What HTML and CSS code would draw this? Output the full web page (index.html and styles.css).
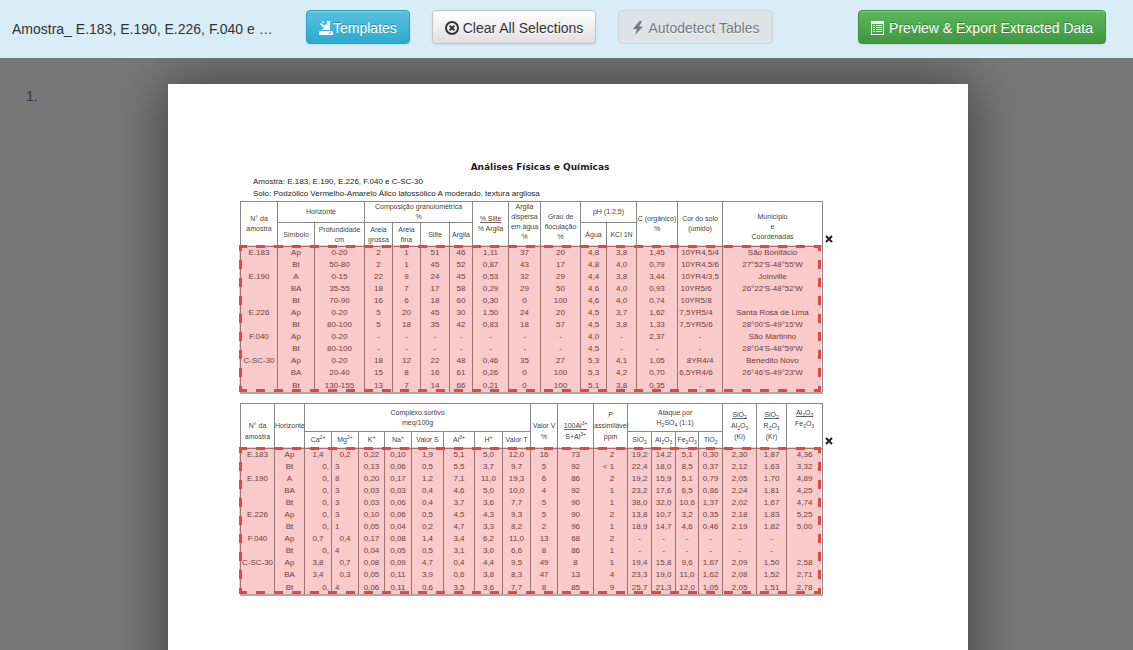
FILE: index.html
```html
<!DOCTYPE html>
<html lang="en">
<head>
<meta charset="utf-8">
<title>Amostra_ E.183, E.190, E.226, F.040 e C-SC-30</title>
<link rel="stylesheet" href="styles.css">
</head>
<body>
<header class="toolbar">
  <span class="doc-name">Amostra_ E.183, E.190, E.226, F.040 e …</span>
  <button type="button" class="btn btn-info"><svg class="icon" viewBox="0 0 14 14" aria-hidden="true"><path d="M1 10h12l1 1v3H0v-3zM2 9l3-2-3-3 1-1 3 2V3l2 1V0h3v9zM1 3l1-1 1 1-1 1zM3 1l1-1 1 1-1 1z"/><path class="slot" d="M10 12h2"/></svg>Templates</button>
  <button type="button" class="btn"><svg class="icon" viewBox="0 0 14 14" aria-hidden="true"><circle class="line" cx="7" cy="7" r="6"/><path class="line" d="M4.6 4.6l4.8 4.8M9.4 4.6L4.6 9.4"/></svg> Clear All Selections</button>
  <button type="button" class="btn" disabled><svg class="icon" viewBox="0 0 14 14" aria-hidden="true"><path d="M8.500 0L2 8h4l-2 6 8-8.500H8L11 0z"/></svg> Autodetect Tables</button>
  <button type="button" class="btn btn-success"><svg class="icon" viewBox="0 0 14 14" aria-hidden="true"><path fill-rule="evenodd" d="M0 0h13v14H0zM1 3v10h11V3z"/><path d="M2 4h2v1H2zM5 4h6v1H5zM2 6h2v1H2zM5 6h6v1H5zM2 8h2v1H2zM5 8h6v1H5zM2 10h2v1H2zM5 10h6v1H5z"/></svg> Preview &amp; Export Extracted Data</button>
</header>
<main class="viewer">
  <nav class="thumbs"><ol><li><a href="#page-1">1.</a></li></ol></nav>
  <article class="page" id="page-1">
    <h1>Análises Físicas e Químicas</h1>
    <p class="note">Amostra: E.183, E.190, E.226, F.040 e C-SC-30<br>Solo: Podzólico Vermelho-Amarelo Álico latossólico A moderado, textura argilosa</p>
    <section class="region">
      <table class="physical">
        <colgroup><col><col><col><col><col><col><col><col><col><col><col><col><col><col><col></colgroup>
        <thead>
          <tr><th rowspan="2">N° da<br>amostra<th colspan="2">Horizonte<th colspan="4">Composição granulométrica<br>%<th rowspan="2"><span class="ratio">% Silte</span><br>% Argila<th rowspan="2" class="low">Argila<br>dispersa<br>em água<br>%<th rowspan="2" class="low">Grau de<br>floculação<br>%<th colspan="2">pH (1:2,5)<th rowspan="2">C (orgânico)<br>%<th rowspan="2">Cor do solo<br>(úmido)<th rowspan="2" class="low">Município<br>e<br>Coordenadas</tr>
          <tr><th>Símbolo<th>Profundidade<br>cm<th>Areia<br>grossa<th>Areia<br>fina<th>Silte<th>Argila<th>Água<th>KCl 1N</tr>
        </thead>
        <tbody>
          <tr><td>E.183<td>Ap<td>0-20<td>2<td>1<td>51<td>46<td>1,11<td>37<td>20<td>4,8<td>3,8<td>1,45<td>10YR4,5/4<td>São Bonifácio</tr>
          <tr><td><td>Bt<td>50-80<td>2<td>1<td>45<td>52<td>0,87<td>43<td>17<td>4,8<td>4,0<td>0,79<td>10YR4,5/6<td>27°52'S-48°55'W</tr>
          <tr><td>E.190<td>A<td>0-15<td>22<td>9<td>24<td>45<td>0,53<td>32<td>29<td>4,4<td>3,8<td>3,44<td>10YR4/3,5<td>Joinville</tr>
          <tr><td><td>BA<td>35-55<td>18<td>7<td>17<td>58<td>0,29<td>29<td>50<td>4,6<td>4,0<td>0,93<td class="lean">10YR5/6<td>26°22'S-48°52'W</tr>
          <tr><td><td>Bt<td>70-90<td>16<td>6<td>18<td>60<td>0,30<td>0<td>100<td>4,6<td>4,0<td>0,74<td class="lean">10YR5/8<td></tr>
          <tr><td>E.226<td>Ap<td>0-20<td>5<td>20<td>45<td>30<td>1,50<td>24<td>20<td>4,5<td>3,7<td>1,62<td class="lean">7,5YR5/4<td>Santa Rosa de Lima</tr>
          <tr><td><td>Bt<td>80-100<td>5<td>18<td>35<td>42<td>0,83<td>18<td>57<td>4,5<td>3,8<td>1,33<td class="lean">7,5YR5/6<td>28°00'S-49°15'W</tr>
          <tr><td>F.040<td>Ap<td>0-20<td>-<td>-<td>-<td>-<td>-<td>-<td>-<td>4,0<td>-<td>2,37<td>-<td>São Martinho</tr>
          <tr><td><td>Bt<td>80-100<td>-<td>-<td>-<td>-<td>-<td>-<td>-<td>4,5<td>-<td>-<td>-<td>28°04'S-48°59'W</tr>
          <tr><td>C-SC-30<td>Ap<td>0-20<td>18<td>12<td>22<td>48<td>0,46<td>35<td>27<td>5,3<td>4,1<td>1,05<td>8YR4/4<td>Benedito Novo</tr>
          <tr><td><td>BA<td>20-40<td>15<td>8<td>16<td>61<td>0,26<td>0<td>100<td>5,3<td>4,2<td>0,70<td class="lean">6,5YR4/6<td>26°46'S-49°23'W</tr>
          <tr><td><td>Bt<td>130-155<td>13<td>7<td>14<td>66<td>0,21<td>0<td>100<td>5,1<td>3,8<td>0,35<td>-<td></tr>
        </tbody>
      </table>
      <div class="selection"><button type="button" class="remove" aria-label="Remove selection"><svg viewBox="0 0 8 8" aria-hidden="true"><path d="M1 1l6 6M7 1L1 7"/></svg></button></div>
    </section>
    <section class="region">
      <table class="chemical">
        <colgroup><col><col><col><col><col><col><col><col><col><col><col><col><col><col><col><col><col><col><col><col></colgroup>
        <thead>
          <tr><th rowspan="2" class="low">N° da<br>amostra<th rowspan="2">Horizonte<th colspan="8">Complexo sortivo<br>meq/100g<th rowspan="2" class="low">Valor V<br>%<th rowspan="2" class="low"><span class="ratio">100Al<sup>3+</sup></span><br>S+Al<sup>3+</sup><th rowspan="2" class="low">P<br>assimilável<br>ppm<th colspan="4">Ataque por<br>H<sub>2</sub>SO<sub>4</sub> (1:1)<th rowspan="2" class="low"><span class="ratio">SiO<sub>2</sub></span><br>Al<sub>2</sub>O<sub>3</sub><br>(Ki)<th rowspan="2" class="low"><span class="ratio">SiO<sub>2</sub></span><br>R<sub>2</sub>O<sub>3</sub><br>(Kr)<th rowspan="2" class="raised"><span class="ratio">Al<sub>2</sub>O<sub>3</sub></span><br>Fe<sub>2</sub>O<sub>3</sub></tr>
          <tr><th>Ca<sup>2+</sup><th>Mg<sup>2+</sup><th>K<sup>+</sup><th>Na<sup>+</sup><th>Valor S<th>Al<sup>3+</sup><th>H<sup>+</sup><th>Valor T<th>SiO<sub>2</sub><th>Al<sub>2</sub>O<sub>3</sub><th>Fe<sub>2</sub>O<sub>3</sub><th>TiO<sub>2</sub></tr>
        </thead>
        <tbody>
          <tr><td>E.183<td>Ap<td>1,4<td>0,2<td>0,22<td>0,10<td>1,9<td>5,1<td>5,0<td>12,0<td>16<td>73<td>2<td>19,2<td>14,2<td>5,1<td>0,30<td>2,30<td>1,87<td>4,36</tr>
          <tr><td><td>Bt<td class="whole">0,<td class="part">3<td>0,13<td>0,06<td>0,5<td>5,5<td>3,7<td>9,7<td>5<td>92<td>&lt; 1<td>22,4<td>18,0<td>8,5<td>0,37<td>2,12<td>1,63<td>3,32</tr>
          <tr><td>E.190<td>A<td class="whole">0,<td class="part">8<td>0,20<td>0,17<td>1,2<td>7,1<td>11,0<td>19,3<td>6<td>86<td>2<td>19,2<td>15,9<td>5,1<td>0,79<td>2,05<td>1,70<td>4,89</tr>
          <tr><td><td>BA<td class="whole">0,<td class="part">3<td>0,03<td>0,03<td>0,4<td>4,6<td>5,0<td>10,0<td>4<td>92<td>1<td>23,2<td>17,6<td>6,5<td>0,86<td>2,24<td>1,81<td>4,25</tr>
          <tr><td><td>Bt<td class="whole">0,<td class="part">3<td>0,03<td>0,06<td>0,4<td>3,7<td>3,6<td>7,7<td>5<td>90<td>1<td>38,0<td>32,0<td>10,6<td>1,37<td>2,02<td>1,67<td>4,74</tr>
          <tr><td>E.226<td>Ap<td class="whole">0,<td class="part">3<td>0,10<td>0,06<td>0,5<td>4,5<td>4,3<td>9,3<td>5<td>90<td>2<td>13,8<td>10,7<td>3,2<td>0,35<td>2,18<td>1,83<td>5,25</tr>
          <tr><td><td>Bt<td class="whole">0,<td class="part">1<td>0,05<td>0,04<td>0,2<td>4,7<td>3,3<td>8,2<td>2<td>96<td>1<td>18,9<td>14,7<td>4,6<td>0,46<td>2,19<td>1,82<td>5,00</tr>
          <tr><td>F.040<td>Ap<td>0,7<td>0,4<td>0,17<td>0,08<td>1,4<td>3,4<td>6,2<td>11,0<td>13<td>68<td>2<td>-<td>-<td>-<td>-<td>-<td>-<td></tr>
          <tr><td><td>Bt<td class="whole">0,<td class="part">4<td>0,04<td>0,05<td>0,5<td>3,1<td>3,0<td>6,6<td>8<td>86<td>1<td>-<td>-<td>-<td>-<td>-<td>-<td></tr>
          <tr><td>C-SC-30<td>Ap<td>3,8<td>0,7<td>0,08<td>0,09<td>4,7<td>0,4<td>4,4<td>9,5<td>49<td>8<td>1<td>19,4<td>15,8<td>9,6<td>1,67<td>2,09<td>1,50<td>2,58</tr>
          <tr><td><td>BA<td>3,4<td>0,3<td>0,05<td>0,11<td>3,9<td>0,6<td>3,8<td>8,3<td>47<td>13<td>4<td>23,3<td>19,0<td>11,0<td>1,62<td>2,08<td>1,52<td>2,71</tr>
          <tr><td><td>Bt<td class="whole">0,<td class="part">4<td>0,06<td>0,11<td>0,6<td>3,5<td>3,6<td>7,7<td>8<td>85<td>9<td>25,7<td>21,3<td>12,0<td>1,05<td>2,05<td>1,51<td>2,78</tr>
        </tbody>
      </table>
      <div class="selection"><button type="button" class="remove" aria-label="Remove selection"><svg viewBox="0 0 8 8" aria-hidden="true"><path d="M1 1l6 6M7 1L1 7"/></svg></button></div>
    </section>
  </article>
</main>
</body>
</html>
```

FILE: styles.css
```css
* { box-sizing: border-box; }

body {
  margin: 0;
  height: 100vh;
  display: flex;
  flex-direction: column;
  background: #777;
  color: #333;
  font: 14px/20px "Liberation Sans", Arial, sans-serif;
}

.toolbar {
  flex: none;
  display: flex;
  align-items: flex-start;
  gap: 22px;
  padding: 10px 27px 14px 12px;
  background: #d9edf7;
}

.doc-name {
  flex: 0 1 272px;
  padding: 9px 0 0;
  overflow: hidden;
  text-overflow: ellipsis;
  white-space: nowrap;
}

.btn {
  flex: none;
  height: 34px;
  padding: 7px 12px 5px;
  border: 1px solid #c5c5c5;
  border-radius: 4px;
  background: linear-gradient(#fff, #e0e0e0);
  box-shadow: inset 0 1px 0 rgba(255, 255, 255, .2), 0 1px 2px rgba(0, 0, 0, .08);
  color: #333;
  font: inherit;
  text-shadow: 0 1px 1px rgba(255, 255, 255, .75);
  white-space: nowrap;
}

.btn-info,
.btn-success {
  color: #fff;
  text-shadow: 0 -1px 0 rgba(0, 0, 0, .25);
}

.btn-info {
  border-color: #26a0c5;
  background-image: linear-gradient(#5bc0de, #2aabd2);
}

.btn-success {
  margin-left: auto;
  border-color: #3e8f3e;
  background-image: linear-gradient(#5cb85c, #419641);
}

.btn:disabled {
  border-color: #ccd5d8;
  background: #dce4e7;
  box-shadow: none;
  color: #747b7e;
}

.icon {
  width: 14px;
  height: 14px;
  vertical-align: -2px;
  fill: currentColor;
}

.icon .line {
  fill: none;
  stroke: currentColor;
  stroke-width: 2;
}

.icon .slot { stroke: #2aabd2; }

.viewer {
  flex: 1;
  min-height: 0;
  display: grid;
  grid-template-columns: 1fr minmax(0, 800px) 1fr;
  align-items: start;
  padding: 26px 0 0 3px;
  overflow: auto;
  scrollbar-width: none;
}

.thumbs ol {
  margin: 0;
  padding: 2px 0 0 23px;
  list-style: none;
}

.thumbs a {
  color: #34344e;
  text-decoration: none;
}

.page {
  grid-column: 2;
  min-height: 1131px;
  padding: 77px 72px 0;
  background: #fff;
  box-shadow: 0 0 50px rgba(0, 0, 0, .5);
}

h1 {
  width: 600px;
  margin: 0;
  color: #222;
  font: bold 9px/12px "DejaVu Sans", sans-serif;
  text-align: center;
}

.note {
  margin: 3px 0 1px;
  padding-left: 13px;
  color: #222;
  font: 8px/12px "Liberation Sans", sans-serif;
}

.region {
  position: relative;
  width: 583px;
  margin-bottom: 9px;
}

table {
  width: 100%;
  border: 1px solid #888;
  border-bottom: 2px solid #aaa;
  border-collapse: collapse;
  table-layout: fixed;
  color: #444;
  font: 8px/12px "Liberation Sans Narrow", "Liberation Sans", sans-serif;
  text-align: center;
  white-space: nowrap;
}

th,
td {
  height: 12px;
  padding: 0;
  border: 0 solid #888;
  border-width: 0 1px;
}

th {
  border-width: 1px;
  font-size: 7px;
  font-weight: normal;
  line-height: 10px;
}

sup,
sub {
  font-size: 5px;
  line-height: 0;
}

.low {
  padding-bottom: 4px;
  vertical-align: bottom;
}

.chemical .low {
  padding-bottom: 6px;
  line-height: 11px;
}

.raised {
  padding-top: 3px;
  line-height: 11px;
  vertical-align: top;
}

.ratio { border-bottom: 1px solid #666; }
.lean { padding-right: 8px; }
.whole { padding-right: 2px; text-align: right; }
.part { padding-left: 3px; text-align: left; }

tbody tr:last-child td { height: 14px; }

.physical thead tr:first-child { height: 21px; }
.physical thead tr:last-child { height: 24px; }
.chemical thead tr:first-child { height: 28px; }
.chemical thead tr:last-child { height: 17px; }

.physical col:nth-child(1),
.physical col:nth-child(2) { width: 37px; }
.physical col:nth-child(3) { width: 50px; }
.physical col:nth-child(4),
.physical col:nth-child(5) { width: 28px; }
.physical col:nth-child(6) { width: 29px; }
.physical col:nth-child(7) { width: 23px; }
.physical col:nth-child(8) { width: 36px; }
.physical col:nth-child(9) { width: 32px; }
.physical col:nth-child(10) { width: 40px; }
.physical col:nth-child(11) { width: 26px; }
.physical col:nth-child(12) { width: 30px; }
.physical col:nth-child(13) { width: 41px; }
.physical col:nth-child(14) { width: 45px; }

.chemical col:nth-child(1) { width: 34px; }
.chemical col:nth-child(2) { width: 30px; }
.chemical col:nth-child(3),
.chemical col:nth-child(4) { width: 27px; }
.chemical col:nth-child(5) { width: 26px; }
.chemical col:nth-child(6) { width: 27px; }
.chemical col:nth-child(7) { width: 32px; }
.chemical col:nth-child(8) { width: 31px; }
.chemical col:nth-child(9),
.chemical col:nth-child(10) { width: 28px; }
.chemical col:nth-child(11) { width: 27px; }
.chemical col:nth-child(12) { width: 36px; }
.chemical col:nth-child(13) { width: 34px; }
.chemical col:nth-child(14),
.chemical col:nth-child(15) { width: 24px; }
.chemical col:nth-child(16) { width: 23px; }
.chemical col:nth-child(17) { width: 24px; }
.chemical col:nth-child(18) { width: 34px; }
.chemical col:nth-child(19) { width: 30px; }

.chemical td:nth-child(13) {
  padding-right: 13px;
  text-align: right;
}

/* Translucent area with a dashed outline made of four gradient strips. */
.selection {
  --across: repeating-linear-gradient(90deg, #e64545 0 8px, transparent 8px 17px, #e64545 17px 18px);
  --down: repeating-linear-gradient(#e64545 0 6px, transparent 6px 15px, #e64545 15px 18px);
  position: absolute;
  inset: 44px 2px 2px -1px;
  background:
    var(--across) top / 100% 3px no-repeat,
    var(--across) bottom / 100% 3px no-repeat,
    var(--down) left / 3px 100% no-repeat,
    var(--down) right / 3px 100% no-repeat,
    rgba(230, 50, 50, .26);
}

.remove {
  position: absolute;
  top: -10px;
  right: -12px;
  width: 8px;
  height: 8px;
  padding: 0;
  border: 0;
  background: none;
}

.remove svg {
  display: block;
  stroke: #222;
  stroke-width: 2;
}
```
